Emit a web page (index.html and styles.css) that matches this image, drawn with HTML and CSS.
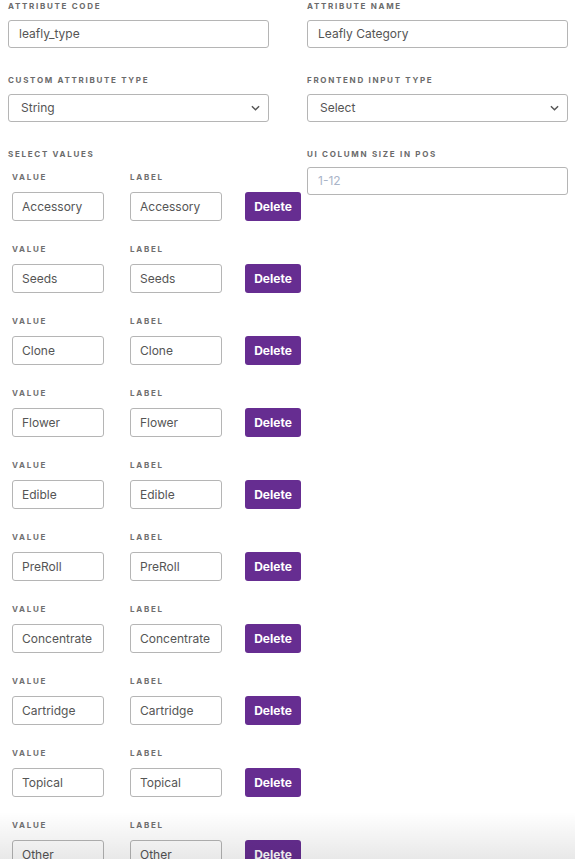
FILE: index.html
```html
<!DOCTYPE html>
<html>
<head>
<meta charset="utf-8">
<link rel="stylesheet" href="styles.css">
</head>
<body>
<div class="form">
  <div class="col">
    <div class="field">
      <div class="lbl">Attribute Code</div>
      <input class="inp" value="leafly_type">
    </div>
    <div class="field">
      <div class="lbl">Custom Attribute Type</div>
      <div class="sel">String<svg viewBox="0 0 10 6" width="9" height="6"><path d="M1 1l4 4 4-4" fill="none" stroke="#555" stroke-width="1.6"/></svg></div>
    </div>
    <div class="field">
      <div class="lbl">Select Values</div>
      <div class="values">
        <div class="vrow"><div class="vcell"><div class="lbl">Value</div><input class="sm" value="Accessory"></div><div class="vcell"><div class="lbl">Label</div><input class="sm" value="Accessory"></div><button class="del">Delete</button></div>
        <div class="vrow"><div class="vcell"><div class="lbl">Value</div><input class="sm" value="Seeds"></div><div class="vcell"><div class="lbl">Label</div><input class="sm" value="Seeds"></div><button class="del">Delete</button></div>
        <div class="vrow"><div class="vcell"><div class="lbl">Value</div><input class="sm" value="Clone"></div><div class="vcell"><div class="lbl">Label</div><input class="sm" value="Clone"></div><button class="del">Delete</button></div>
        <div class="vrow"><div class="vcell"><div class="lbl">Value</div><input class="sm" value="Flower"></div><div class="vcell"><div class="lbl">Label</div><input class="sm" value="Flower"></div><button class="del">Delete</button></div>
        <div class="vrow"><div class="vcell"><div class="lbl">Value</div><input class="sm" value="Edible"></div><div class="vcell"><div class="lbl">Label</div><input class="sm" value="Edible"></div><button class="del">Delete</button></div>
        <div class="vrow"><div class="vcell"><div class="lbl">Value</div><input class="sm" value="PreRoll"></div><div class="vcell"><div class="lbl">Label</div><input class="sm" value="PreRoll"></div><button class="del">Delete</button></div>
        <div class="vrow"><div class="vcell"><div class="lbl">Value</div><input class="sm" value="Concentrate"></div><div class="vcell"><div class="lbl">Label</div><input class="sm" value="Concentrate"></div><button class="del">Delete</button></div>
        <div class="vrow"><div class="vcell"><div class="lbl">Value</div><input class="sm" value="Cartridge"></div><div class="vcell"><div class="lbl">Label</div><input class="sm" value="Cartridge"></div><button class="del">Delete</button></div>
        <div class="vrow"><div class="vcell"><div class="lbl">Value</div><input class="sm" value="Topical"></div><div class="vcell"><div class="lbl">Label</div><input class="sm" value="Topical"></div><button class="del">Delete</button></div>
        <div class="vrow"><div class="vcell"><div class="lbl">Value</div><input class="sm" value="Other"></div><div class="vcell"><div class="lbl">Label</div><input class="sm" value="Other"></div><button class="del">Delete</button></div>
      </div>
    </div>
  </div>
  <div class="col">
    <div class="field">
      <div class="lbl">Attribute Name</div>
      <input class="inp" value="Leafly Category">
    </div>
    <div class="field">
      <div class="lbl">Frontend Input Type</div>
      <div class="sel">Select<svg viewBox="0 0 10 6" width="9" height="6"><path d="M1 1l4 4 4-4" fill="none" stroke="#555" stroke-width="1.6"/></svg></div>
    </div>
    <div class="field">
      <div class="lbl lbl-tight">UI Column Size in POS</div>
      <input class="inp" placeholder="1-12">
    </div>
  </div>
</div>
<div class="fade"></div>
</body>
</html>
```
FILE: styles.css
```css
html, body { margin: 0; padding: 0; background: #fff; overflow: hidden; height: 859px; }
body { font-family: Inter, "Noto Sans", sans-serif; color: #555; }
.form { display: grid; grid-template-columns: 261px 261px; column-gap: 38px; padding-left: 8px; }
.col { display: flex; flex-direction: column; }
.field { display: flex; flex-direction: column; margin-bottom: 26px; }
.lbl { font-size: 8px; font-weight: 700; letter-spacing: 1.7px; text-transform: uppercase; color: #6b6b6b; height: 12px; line-height: 12px; margin-bottom: 8px; }
.lbl-tight { margin-bottom: 7px; }
.inp, .sel { box-sizing: border-box; height: 28px; width: 261px; border: 1px solid #b5b5b5; border-radius: 3px; padding: 0 10px; font-family: inherit; font-size: 12px; line-height: 26px; color: #555; background: #fff; outline: none; }
.inp { padding-bottom: 1px; }
.inp::placeholder { color: #a9b4c8; }
.sel { display: flex; align-items: center; justify-content: space-between; padding: 0 8px 1px 12px; }
.values { display: flex; flex-direction: column; padding-left: 4px; margin-top: 3px; }
.vrow { display: flex; align-items: flex-start; height: 72px; flex-shrink: 0; }
.vcell { display: flex; flex-direction: column; width: 118px; flex-shrink: 0; }
.vcell + .vcell { width: 115px; }
.vcell .lbl { margin-bottom: 9px; color: #707070; }
.sm { box-sizing: border-box; width: 92px; height: 29px; border: 1px solid #b5b5b5; border-radius: 3px; padding: 0 9px 1px; font-family: inherit; font-size: 12px; color: #555; background: #fff; outline: none; }
.del { flex-shrink: 0; margin-top: 21px; width: 56px; height: 29px; border: 0; border-radius: 3px; background: #662d91; color: #fff; font-family: inherit; font-weight: 700; font-size: 12px; padding: 0 0 1px; }
.fade { position: absolute; left: 0; right: 0; top: 812px; height: 47px; background: linear-gradient(to bottom, rgba(0,0,0,0), rgba(0,0,0,0.09)); pointer-events: none; }
```
